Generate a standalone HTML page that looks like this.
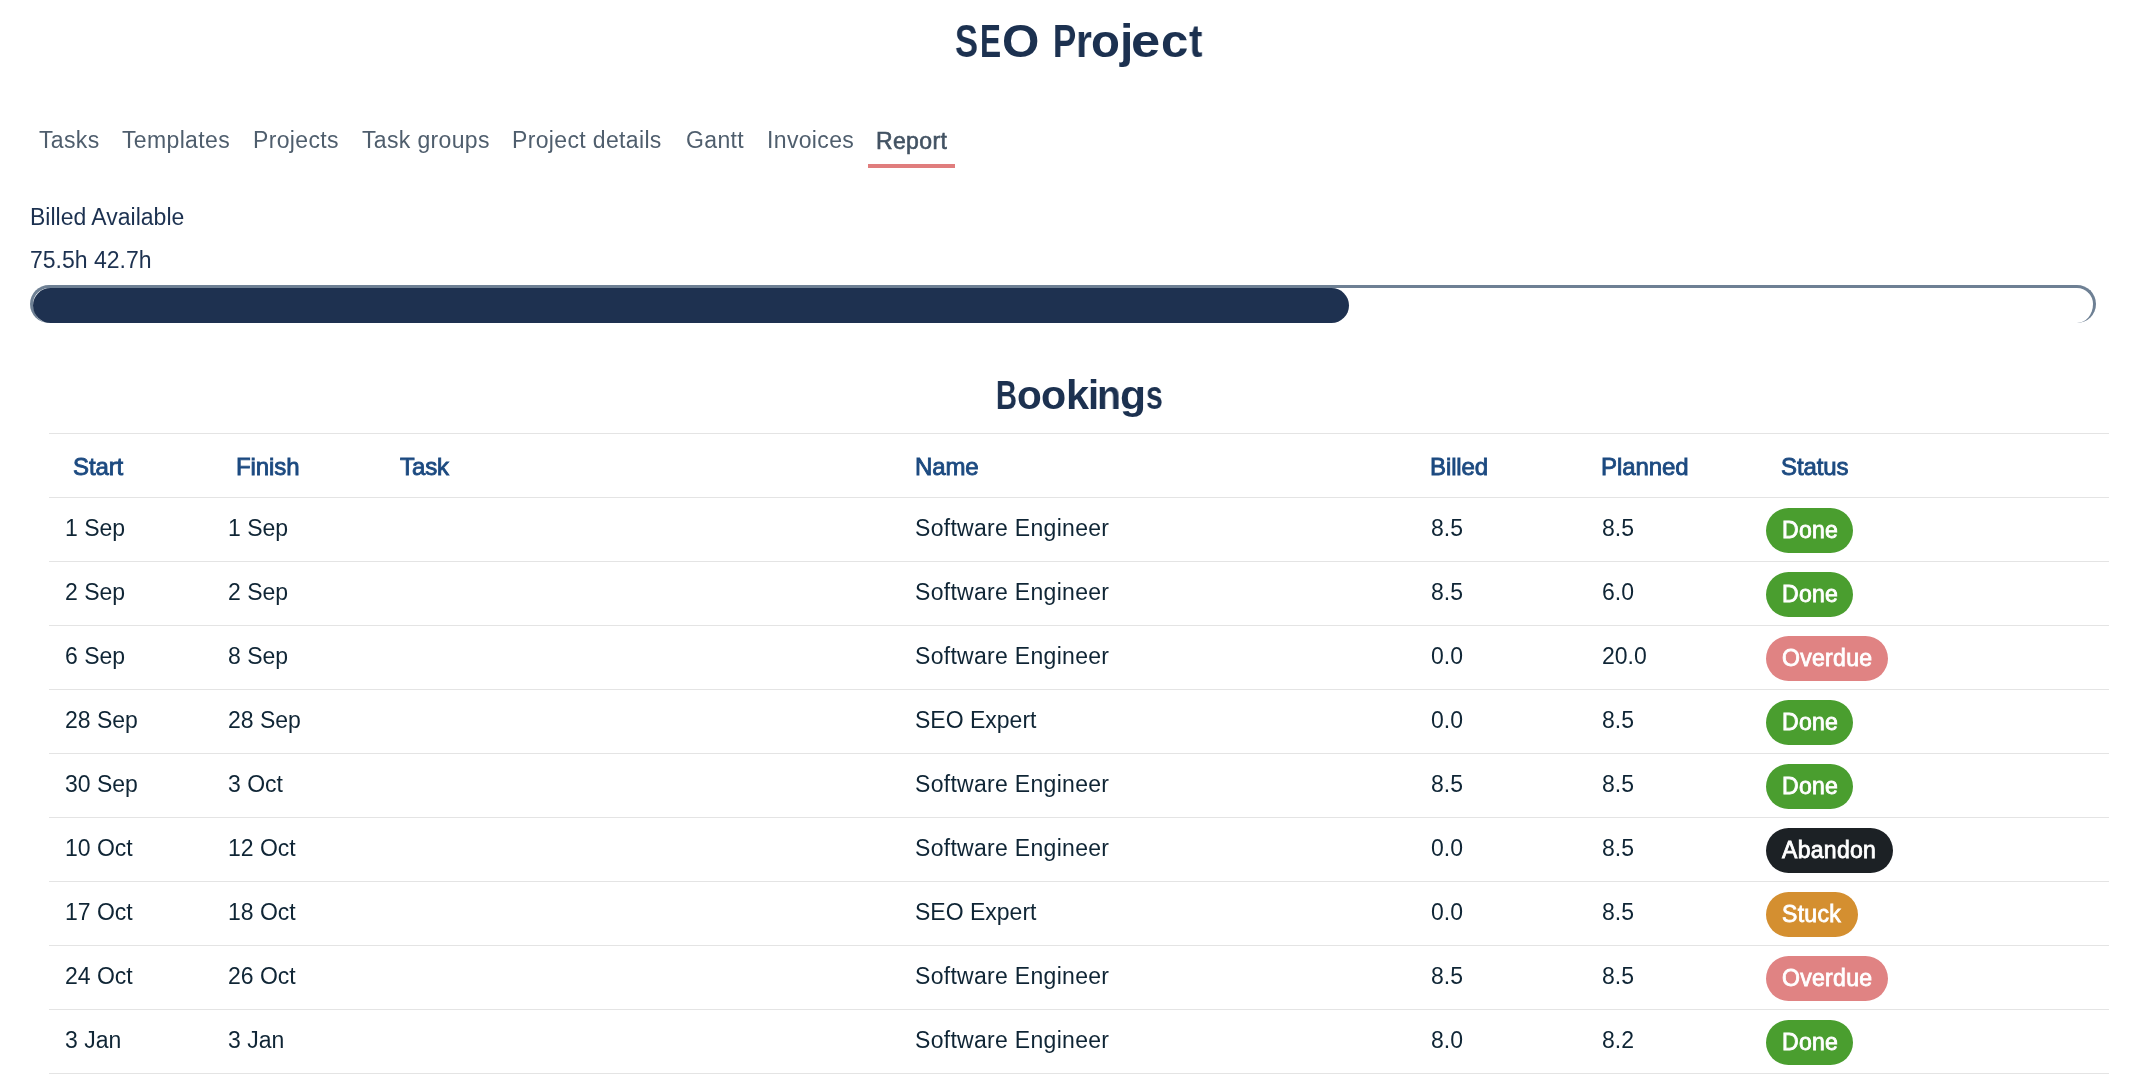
<!DOCTYPE html>
<html>
<head>
<meta charset="utf-8">
<style>
html,body{margin:0;padding:0;background:#fff;width:2134px;height:1078px;overflow:hidden;}
body{font-family:"Liberation Sans",sans-serif;position:relative;}
.a,.badge{will-change:transform;}
.a{position:absolute;white-space:nowrap;line-height:1;}
.title{font-weight:bold;color:#1c3150;}
.nav{font-size:23px;color:#4f5e6d;letter-spacing:0.35px;}
.sum{font-size:23px;color:#1c3150;}
.th{font-size:24px;color:#1c4a80;letter-spacing:-0.1px;-webkit-text-stroke:0.85px #1c4a80;}
.td{font-size:23px;color:#0f2535;}
.nm{letter-spacing:0.3px;}
.line{position:absolute;left:49px;width:2060px;height:1px;background:#e4e4e4;}
.badge{position:absolute;left:1766px;height:45px;border-radius:23px;color:#fff;font-size:23px;-webkit-text-stroke:0.8px #fff;letter-spacing:0.3px;line-height:44px;padding:0 0 0 16px;box-sizing:border-box;white-space:nowrap;}
.done{background:#4a9e2f;width:87px;}
.over{background:#e08383;width:122px;}
.aband{background:#1c2125;width:127px;}
.stuck{background:#d48f30;width:92px;}
</style>
</head>
<body>
<div id="t1">
<div class="a title" style="left:954.90px;top:18px;font-size:46px;transform:scaleX(0.748);transform-origin:0 0;">S</div>
<div class="a title" style="left:980.25px;top:18px;font-size:46px;transform:scaleX(0.685);transform-origin:0 0;">E</div>
<div class="a title" style="left:1002.11px;top:18px;font-size:46px;transform:scaleX(1.044);transform-origin:0 0;">O</div>
<div class="a title" style="left:1053.24px;top:18px;font-size:46px;transform:scaleX(0.754);transform-origin:0 0;">P</div>
<div class="a title" style="left:1076.34px;top:18px;font-size:46px;transform:scaleX(0.886);transform-origin:0 0;">r</div>
<div class="a title" style="left:1091.34px;top:18px;font-size:46px;transform:scaleX(1.029);transform-origin:0 0;">o</div>
<div class="a title" style="left:1119.55px;top:18px;font-size:46px;transform:scaleX(1.045);transform-origin:0 0;">j</div>
<div class="a title" style="left:1131.32px;top:18px;font-size:46px;transform:scaleX(1.141);transform-origin:0 0;">e</div>
<div class="a title" style="left:1160.56px;top:18px;font-size:46px;transform:scaleX(1.068);transform-origin:0 0;">c</div>
<div class="a title" style="left:1189.32px;top:18px;font-size:46px;transform:scaleX(0.879);transform-origin:0 0;">t</div>
</div>

<div class="a nav" style="left:39px;top:129px;">Tasks</div>
<div class="a nav" style="left:122px;top:129px;">Templates</div>
<div class="a nav" style="left:253px;top:129px;">Projects</div>
<div class="a nav" style="left:362px;top:129px;">Task groups</div>
<div class="a nav" style="left:512px;top:129px;">Project details</div>
<div class="a nav" style="left:686px;top:129px;">Gantt</div>
<div class="a nav" style="left:767px;top:129px;">Invoices</div>
<div class="a nav" style="left:876px;top:130px;color:#435363;-webkit-text-stroke:0.6px #435363;">Report</div>
<div style="position:absolute;left:868px;top:164px;width:87px;height:4px;background:#e07d7d;"></div>

<div class="a sum" style="left:30px;top:206px;">Billed Available</div>
<div class="a sum" style="left:30px;top:249px;">75.5h 42.7h</div>

<div style="position:absolute;left:30px;top:285px;width:2066px;height:38px;box-sizing:border-box;border:3px solid #6e8094;border-bottom:none;border-radius:20px;"></div>
<div style="position:absolute;left:33px;top:288px;width:1316px;height:35px;background:#1e3150;border-radius:18px;"></div>

<div id="t2">
<div class="a title" style="left:995.73px;top:375px;font-size:40px;transform:scaleX(0.725);transform-origin:0 0;">B</div>
<div class="a title" style="left:1016.77px;top:375px;font-size:40px;transform:scaleX(1.014);transform-origin:0 0;">o</div>
<div class="a title" style="left:1041.04px;top:375px;font-size:40px;transform:scaleX(1.029);transform-origin:0 0;">o</div>
<div class="a title" style="left:1065.79px;top:375px;font-size:40px;transform:scaleX(1.037);transform-origin:0 0;">k</div>
<div class="a title" style="left:1088.0px;top:375px;font-size:40px;">i</div>
<div class="a title" style="left:1096.96px;top:375px;font-size:40px;transform:scaleX(0.979);transform-origin:0 0;">n</div>
<div class="a title" style="left:1120.07px;top:375px;font-size:40px;transform:scaleX(1.065);transform-origin:0 0;">g</div>
<div class="a title" style="left:1145.98px;top:375px;font-size:40px;transform:scaleX(0.758);transform-origin:0 0;">s</div>
</div>

<div class="line" style="top:433px;"></div>
<div class="line" style="top:497px;"></div>
<div class="line" style="top:561px;"></div>
<div class="line" style="top:625px;"></div>
<div class="line" style="top:689px;"></div>
<div class="line" style="top:753px;"></div>
<div class="line" style="top:817px;"></div>
<div class="line" style="top:881px;"></div>
<div class="line" style="top:945px;"></div>
<div class="line" style="top:1009px;"></div>
<div class="line" style="top:1073px;"></div>

<div class="a th" style="left:73px;top:455px;">Start</div>
<div class="a th" style="left:236px;top:455px;">Finish</div>
<div class="a th" style="left:400px;top:455px;">Task</div>
<div class="a th" style="left:915px;top:455px;">Name</div>
<div class="a th" style="left:1430px;top:455px;">Billed</div>
<div class="a th" style="left:1601px;top:455px;">Planned</div>
<div class="a th" style="left:1781px;top:455px;">Status</div>

<div id="rows">
<div class="a td" style="left:65px;top:517px;">1 Sep</div>
<div class="a td" style="left:228px;top:517px;">1 Sep</div>
<div class="a td" style="left:915px;letter-spacing:0.3px;top:517px;">Software Engineer</div>
<div class="a td" style="left:1431px;top:517px;">8.5</div>
<div class="a td" style="left:1602px;top:517px;">8.5</div>
<div class="badge done" style="top:508px;">Done</div>
<div class="a td" style="left:65px;top:581px;">2 Sep</div>
<div class="a td" style="left:228px;top:581px;">2 Sep</div>
<div class="a td" style="left:915px;letter-spacing:0.3px;top:581px;">Software Engineer</div>
<div class="a td" style="left:1431px;top:581px;">8.5</div>
<div class="a td" style="left:1602px;top:581px;">6.0</div>
<div class="badge done" style="top:572px;">Done</div>
<div class="a td" style="left:65px;top:645px;">6 Sep</div>
<div class="a td" style="left:228px;top:645px;">8 Sep</div>
<div class="a td" style="left:915px;letter-spacing:0.3px;top:645px;">Software Engineer</div>
<div class="a td" style="left:1431px;top:645px;">0.0</div>
<div class="a td" style="left:1602px;top:645px;">20.0</div>
<div class="badge over" style="top:636px;">Overdue</div>
<div class="a td" style="left:65px;top:709px;">28 Sep</div>
<div class="a td" style="left:228px;top:709px;">28 Sep</div>
<div class="a td" style="left:915px;top:709px;">SEO Expert</div>
<div class="a td" style="left:1431px;top:709px;">0.0</div>
<div class="a td" style="left:1602px;top:709px;">8.5</div>
<div class="badge done" style="top:700px;">Done</div>
<div class="a td" style="left:65px;top:773px;">30 Sep</div>
<div class="a td" style="left:228px;top:773px;">3 Oct</div>
<div class="a td" style="left:915px;letter-spacing:0.3px;top:773px;">Software Engineer</div>
<div class="a td" style="left:1431px;top:773px;">8.5</div>
<div class="a td" style="left:1602px;top:773px;">8.5</div>
<div class="badge done" style="top:764px;">Done</div>
<div class="a td" style="left:65px;top:837px;">10 Oct</div>
<div class="a td" style="left:228px;top:837px;">12 Oct</div>
<div class="a td" style="left:915px;letter-spacing:0.3px;top:837px;">Software Engineer</div>
<div class="a td" style="left:1431px;top:837px;">0.0</div>
<div class="a td" style="left:1602px;top:837px;">8.5</div>
<div class="badge aband" style="top:828px;">Abandon</div>
<div class="a td" style="left:65px;top:901px;">17 Oct</div>
<div class="a td" style="left:228px;top:901px;">18 Oct</div>
<div class="a td" style="left:915px;top:901px;">SEO Expert</div>
<div class="a td" style="left:1431px;top:901px;">0.0</div>
<div class="a td" style="left:1602px;top:901px;">8.5</div>
<div class="badge stuck" style="top:892px;">Stuck</div>
<div class="a td" style="left:65px;top:965px;">24 Oct</div>
<div class="a td" style="left:228px;top:965px;">26 Oct</div>
<div class="a td" style="left:915px;letter-spacing:0.3px;top:965px;">Software Engineer</div>
<div class="a td" style="left:1431px;top:965px;">8.5</div>
<div class="a td" style="left:1602px;top:965px;">8.5</div>
<div class="badge over" style="top:956px;">Overdue</div>
<div class="a td" style="left:65px;top:1029px;">3 Jan</div>
<div class="a td" style="left:228px;top:1029px;">3 Jan</div>
<div class="a td" style="left:915px;letter-spacing:0.3px;top:1029px;">Software Engineer</div>
<div class="a td" style="left:1431px;top:1029px;">8.0</div>
<div class="a td" style="left:1602px;top:1029px;">8.2</div>
<div class="badge done" style="top:1020px;">Done</div>
</div>
</body>
</html>
